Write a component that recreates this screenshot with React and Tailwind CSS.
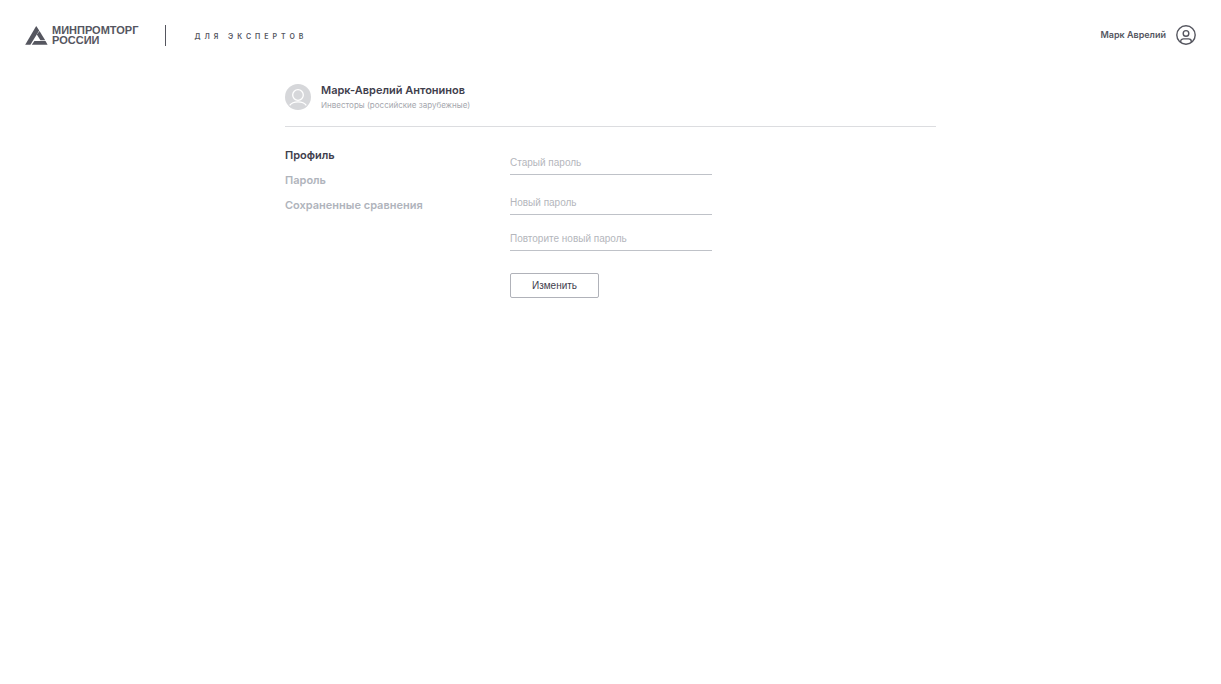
const menu = [
  { label: 'Профиль', href: '#profile', active: true },
  { label: 'Пароль', href: '#password' },
  { label: 'Сохраненные сравнения', href: '#saved' },
];

function Logo() {
  return (
    <a href="#home" className="flex items-center gap-1 text-[#55565f]">
      <svg viewBox="0 0 23 19" className="h-[19px] w-[23px]" fill="currentColor" aria-hidden="true">
        <path d="M11.2 0 L14.2 4.6 L5.4 18.7 H0.2 Z" />
        <path d="M11.8 8.6 L14.5 5.1 L20.2 14.2 H15.4 Z" />
        <path d="M9.4 14.9 H20.5 L22.6 18.7 H6.8 Z" />
      </svg>
      <span className="text-[11px] leading-[10px] font-bold">
        <span className="block">МИНПРОМТОРГ</span>
        <span className="block">РОССИИ</span>
      </span>
    </a>
  );
}

function UserIcon() {
  return (
    <svg viewBox="0 0 20 20" className="size-5" fill="none" stroke="#55565f" strokeWidth="1.4" aria-hidden="true">
      <circle cx="10" cy="10" r="9.2" />
      <circle cx="10" cy="8.4" r="2.8" />
      <path d="M4.7 17.3 V16.5 C4.7 14.8 6 13.9 7.5 13.9 H12.5 C14 13.9 15.3 14.8 15.3 16.5 V17.3" />
    </svg>
  );
}

function Avatar() {
  return (
    <svg viewBox="0 0 26 26" className="size-[26px]" aria-hidden="true">
      <circle cx="13" cy="13" r="13" fill="#d6d7da" />
      <circle cx="13" cy="11" r="5.3" fill="none" stroke="#fff" strokeWidth="1.3" />
      <path d="M4.7 21.3 C6.5 18.7 9.5 17.8 13 17.8 S19.5 18.7 21.3 21.3" fill="none" stroke="#fff" strokeWidth="1.3" />
    </svg>
  );
}

function Field({ name, label, className }) {
  return (
    <div className={className}>
      <input
        name={name}
        type="password"
        aria-label={label}
        placeholder={label}
        className="block h-6 w-full border-b border-[#bfc2c8] bg-transparent text-[10px] leading-4 text-[#3f404d] outline-none placeholder:text-[#b4b6bc] focus:border-[#55565f]"
      />
    </div>
  );
}

export default function App() {
  return (
    <div className="min-h-screen bg-white font-['Liberation_Sans',sans-serif] text-[#3f404d]">
      <header className="flex h-[70px] items-center justify-between px-[25px]">
        <div className="flex items-center">
          <Logo />
          <span className="ml-[27px] h-[21px] w-px bg-[#55565f]" />
          <span className="ml-7 pt-1 font-['Inter',sans-serif] text-[7px] leading-[10px] font-semibold tracking-[4px] text-[#55565f]">ДЛЯ ЭКСПЕРТОВ</span>
        </div>
        <a href="#account" className="flex items-center gap-[10px] font-['Inter',sans-serif] text-[9px] font-semibold text-[#55565f]">
          Марк Аврелий
          <UserIcon />
        </a>
      </header>

      <main className="mx-auto max-w-[651px] pt-3">
        <section className="flex items-center gap-[10px] border-b border-[#dcdde0] pb-[14px]">
          <Avatar />
          <div>
            <h1 className="font-['Inter',sans-serif] text-[11px] leading-4 font-semibold">Марк-Аврелий Антонинов</h1>
            <p className="font-['Inter',sans-serif] text-[8px] leading-[14px] text-[#a5a7ae]">Инвесторы (российские зарубежные)</p>
          </div>
        </section>

        <div className="flex pt-4">
          <nav className="flex w-[225px] flex-col gap-[9px] pt-1 font-['Inter',sans-serif] text-[11px] leading-4 font-semibold">
            {menu.map((item) => (
              <a key={item.label} href={item.href} className={item.active ? 'text-[#3f404d]' : 'text-[#b0b4bc]'}>
                {item.label}
              </a>
            ))}
          </nav>
          <form className="w-[202px] pt-2">
            <Field name="old" label="Старый пароль" />
            <Field name="new" label="Новый пароль" className="mt-4" />
            <Field name="repeat" label="Повторите новый пароль" className="mt-3" />
            <button type="button" className="mt-[22px] h-[25px] w-[89px] rounded-xs border border-[#b0b2b9] text-[10px]">
              Изменить
            </button>
          </form>
        </div>
      </main>
    </div>
  );
}
